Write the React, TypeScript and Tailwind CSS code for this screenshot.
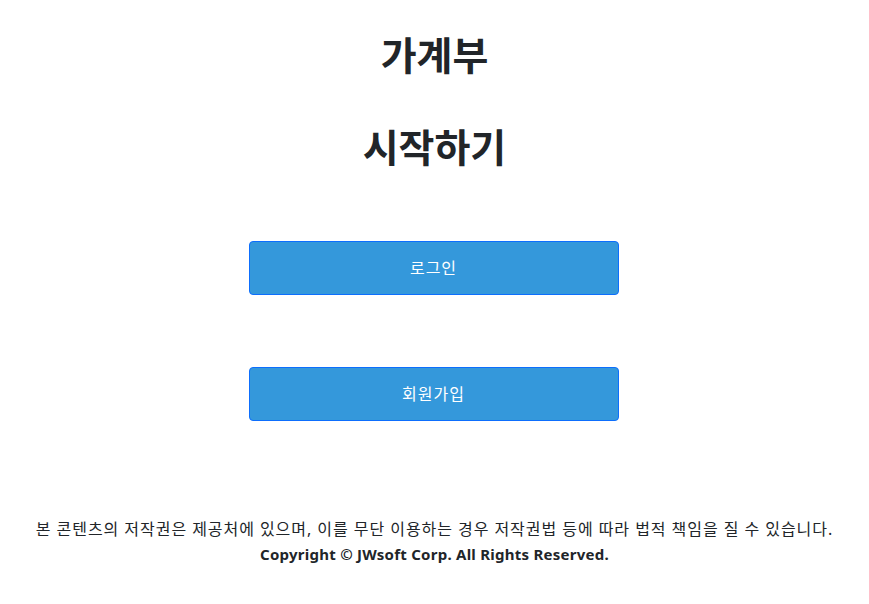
export default function App() {
  const font = { fontFamily: '"Noto Sans", "Noto Sans CJK KR", sans-serif' };
  return (
    <div className="min-h-[604px] w-full bg-white text-[#212529] flex flex-col items-center" style={font}>
      <h1 className="mt-[30px] text-[39px] leading-[50px] font-bold">가계부</h1>
      <h2 className="mt-[42px] text-[39px] leading-[50px] font-bold">시작하기</h2>
      <div className="mt-[69px] flex flex-col gap-[72px] w-[370px] -translate-x-[1px]">
        <button className="h-[54px] w-full rounded-[4px] border border-[#0d6efd] bg-[#3498db] text-white text-[16px] tracking-[1px]">로그인</button>
        <button className="h-[54px] w-full rounded-[4px] border border-[#0d6efd] bg-[#3498db] text-white text-[16px] tracking-[1px]">회원가입</button>
      </div>
      <div className="mt-[96px] text-center text-[#212529]">
        <p className="leading-[25px] text-[16px] tracking-[0.95px]">본 콘텐츠의 저작권은 제공처에 있으며, 이를 무단 이용하는 경우 저작권법 등에 따라 법적 책임을 질 수 있습니다.</p>
        <p className="leading-[25px] text-[15px] tracking-[0.25px] font-bold">Copyright © JWsoft Corp. All Rights Reserved.</p>
      </div>
    </div>
  );
}
